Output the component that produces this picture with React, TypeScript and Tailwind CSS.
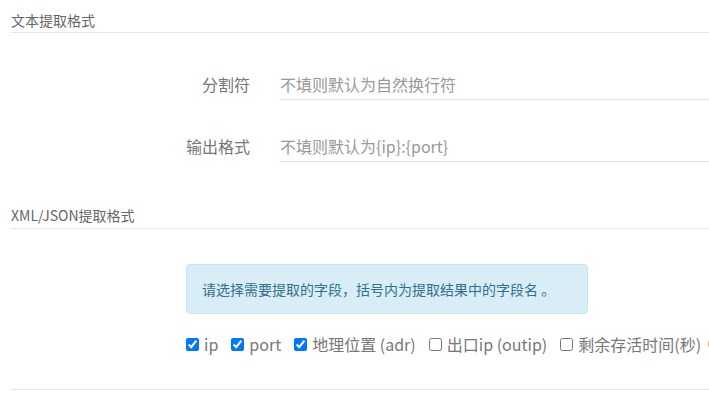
export default function App() {
  const fields = [
    { label: "ip", checked: true },
    { label: "port", checked: true },
    { label: "地理位置 (adr)", checked: true },
    { label: "出口ip (outip)", checked: false },
    { label: "剩余存活时间(秒)", checked: false },
  ];

  return (
    <div className="w-full overflow-hidden bg-white font-['Noto_Sans_CJK_SC','Noto_Sans',sans-serif]">
      <div className="w-[760px] pl-[11px]">
        <div className="border-b border-[#e5e5e5] pt-[10px] pb-[2px] text-[14px] leading-[20px] text-[#666]">
          文本提取格式
        </div>

        <div className="mt-[33px] flex items-stretch">
          <label className="flex w-[239px] items-center justify-end pt-[2px] text-[16px] text-[#777]">
            分割符
          </label>
          <div className="ml-[30px] flex h-[34px] flex-1 items-center border-b border-[#e3e3e3] pt-[2px] text-[16px] text-[#999]">
            不填则默认为自然换行符
          </div>
        </div>

        <div className="mt-[28px] flex items-stretch">
          <label className="flex w-[239px] items-center justify-end pt-[2px] text-[16px] text-[#777]">
            输出格式
          </label>
          <div className="ml-[30px] flex h-[34px] flex-1 items-center border-b border-[#e3e3e3] pt-[2px] text-[16px] text-[#999]">
            不填则默认为{"{ip}:{port}"}
          </div>
        </div>

        <div className="mt-[43px] border-b border-[#e5e5e5] pb-[3px] text-[14px] leading-[20px] text-[#666]">
          XML/JSON提取格式
        </div>

        <div className="ml-[175px] mt-[35px] flex h-[50px] w-[402px] items-center rounded-[4px] border border-[#bce8f1] bg-[#d9edf7] pl-[15px] text-[14px] text-[#31708f]">
          请选择需要提取的字段，括号内为提取结果中的字段名 。
        </div>

        <div className="ml-[175px] mt-[20px] flex h-[20px] items-center gap-[13px] whitespace-nowrap text-[16px] text-[#777]">
          {fields.map((field) => (
            <label key={field.label} className="flex items-center gap-[5px]">
              <input
                type="checkbox"
                defaultChecked={field.checked}
                className="m-0 h-[13px] w-[13px] accent-[#0075ff]"
              />
              <span>{field.label}</span>
            </label>
          ))}
          <span className="-ml-[6px] inline-block h-[14px] w-[14px] rounded-full bg-[#f0ad4e]" />
        </div>

        <div className="mt-[35px] border-b border-[#e5e5e5]" />
        <div className="h-[14px]" />
      </div>
    </div>
  );
}
